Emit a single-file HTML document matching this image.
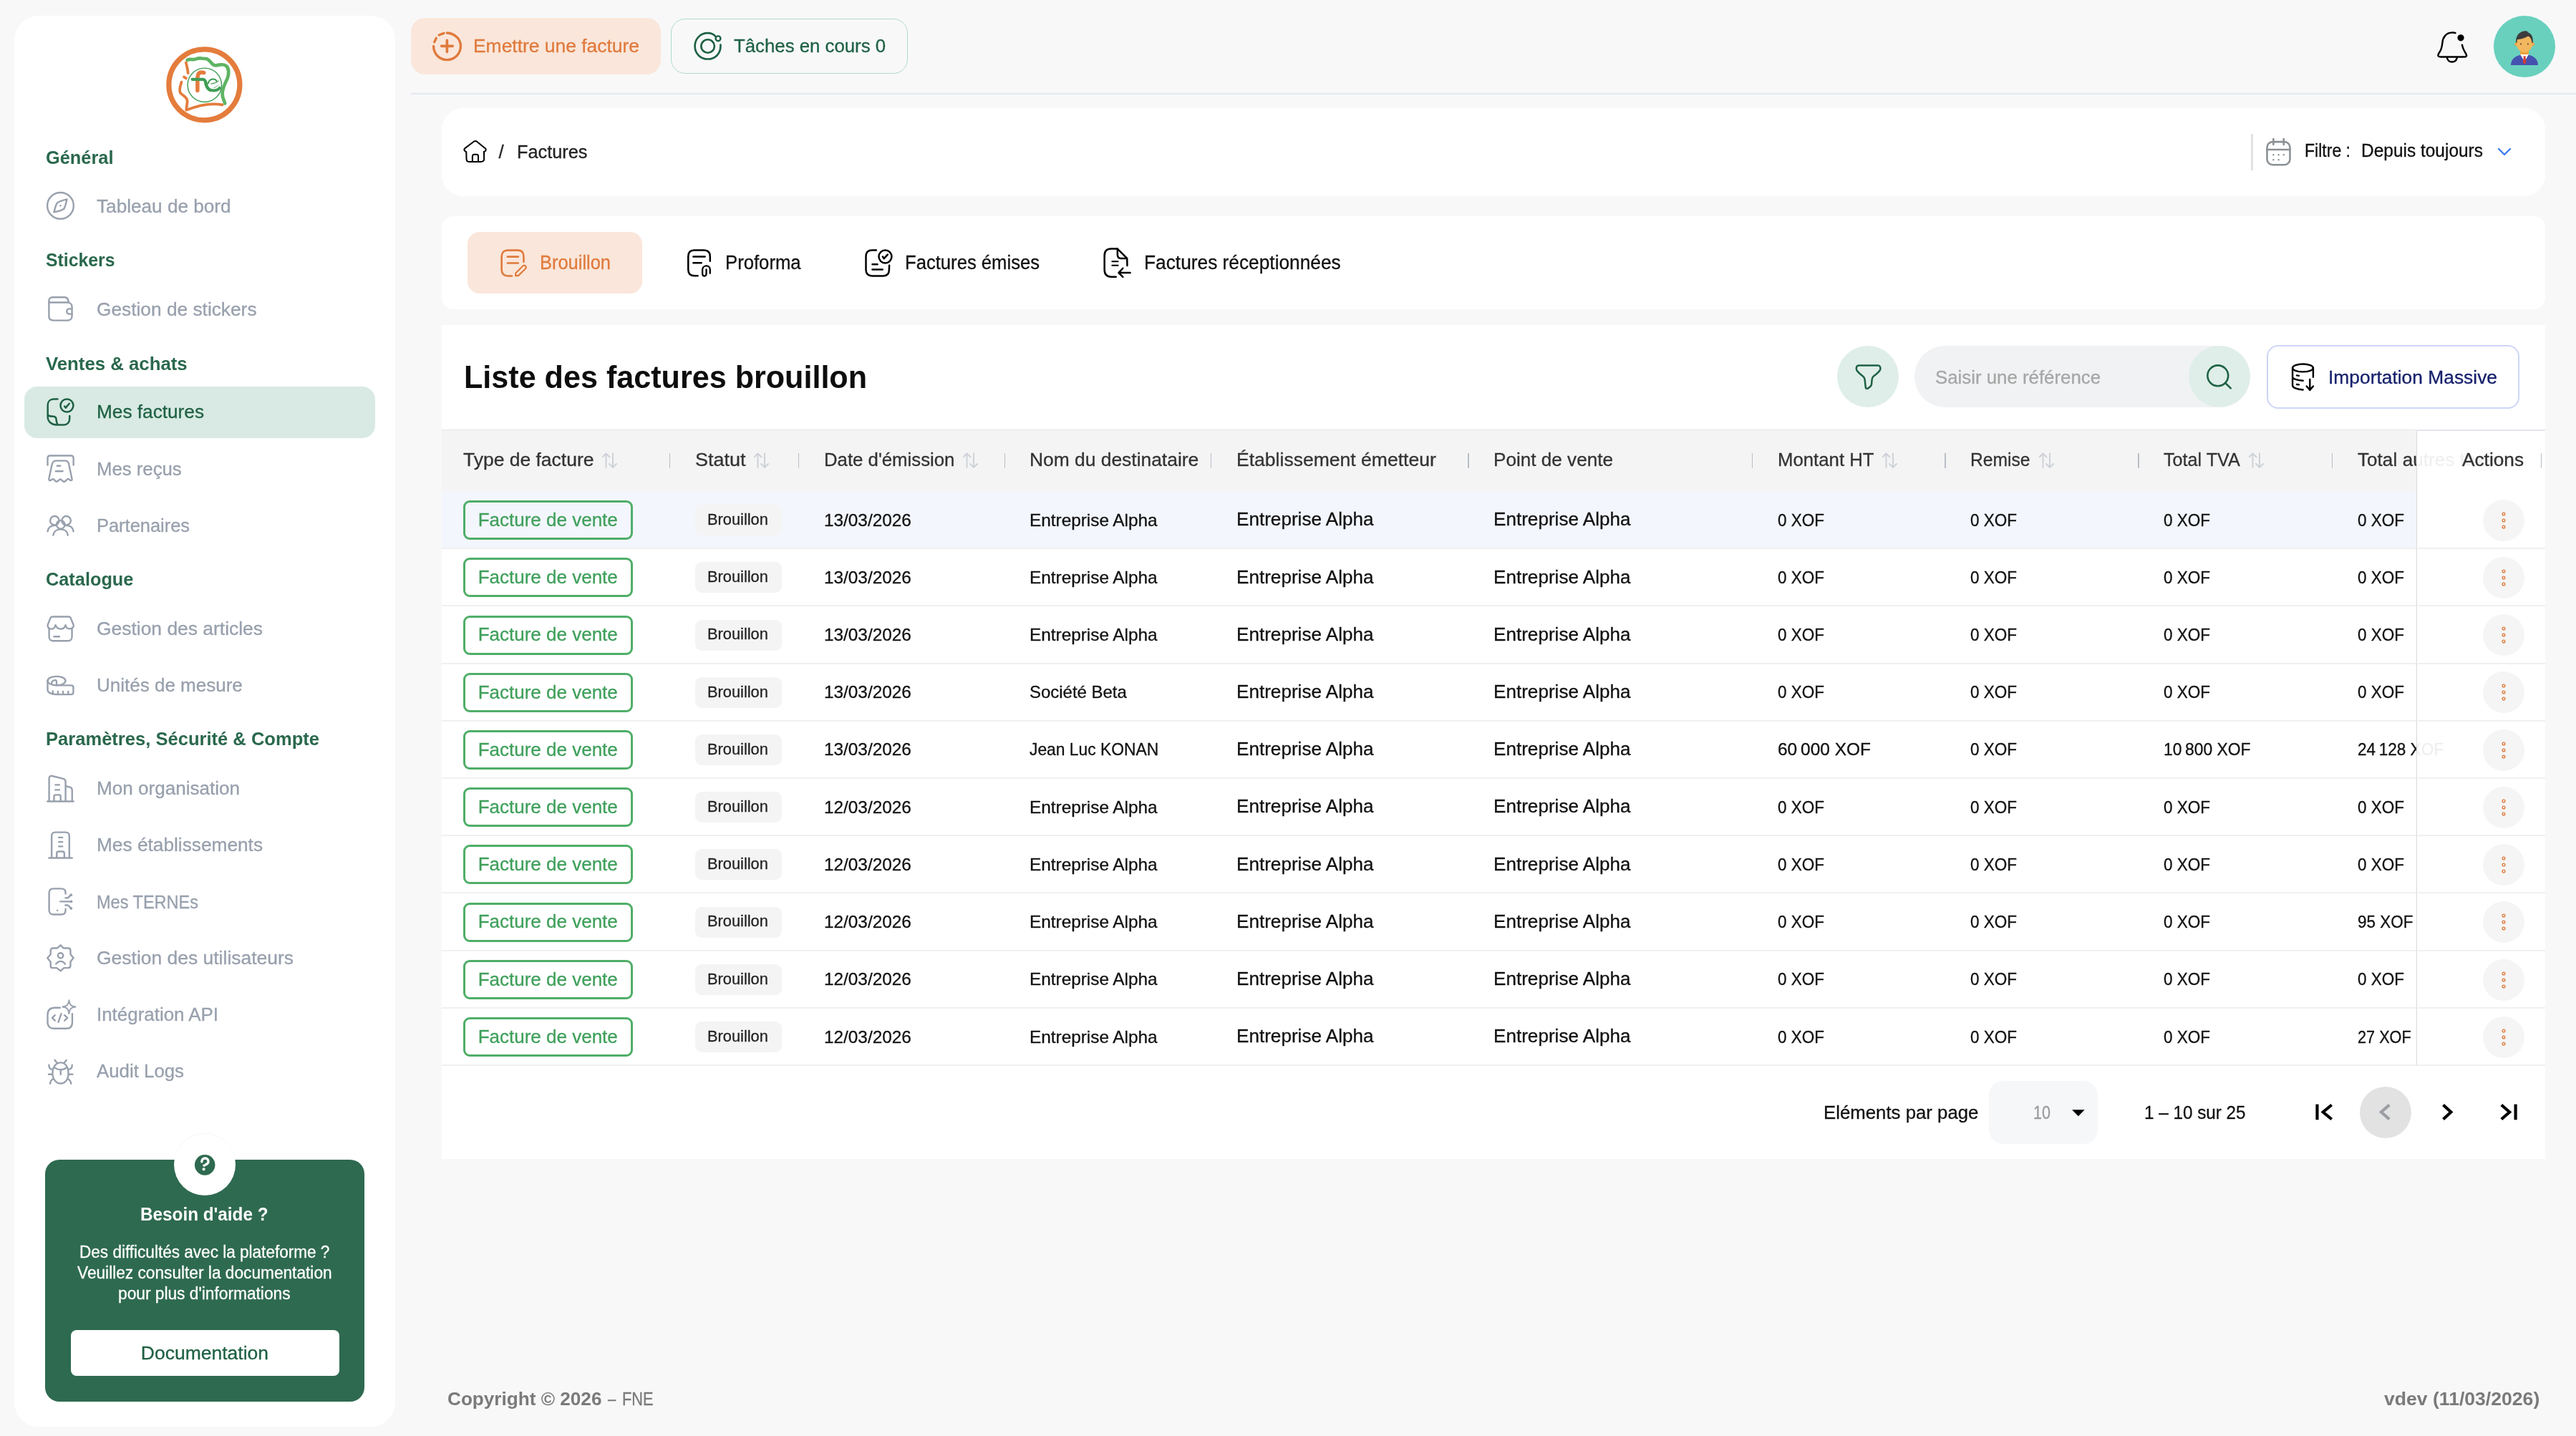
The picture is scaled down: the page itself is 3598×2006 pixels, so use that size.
<!DOCTYPE html><html><head><meta charset="utf-8"><style>
html,body{margin:0;padding:0;}
body{width:3598px;height:2006px;background:#f8f8f9;position:relative;overflow:hidden;font-family:"Liberation Sans",sans-serif;}
.t{position:absolute;white-space:nowrap;-webkit-font-smoothing:antialiased;}
#w{position:absolute;left:0;top:0;width:3598px;height:2006px;will-change:transform;}
.b{position:absolute;box-sizing:border-box;}
</style></head><body><div id="w">
<div class="b" style="left:20.0px;top:22.0px;width:532.0px;height:1971.0px;background:#fff;border-radius:34px;"></div>
<svg class="b" style="left:220px;top:55px;" width="130" height="130" viewBox="0 0 1436 1436" fill="none" stroke-linecap="round" stroke-linejoin="round">
<circle cx="722" cy="700" r="547" stroke="#e47c3c" stroke-width="80"/>
<circle cx="727" cy="705" r="262" stroke="#3f9e55" stroke-width="16"/>
<path d="M460,320 C520,290 560,330 600,300 C650,280 700,300 760,300 C820,320 830,390 880,400 C950,410 990,360 1060,410 C1110,450 1100,540 1080,600 C1040,680 1000,760 1000,840 C1000,920 1040,960 1040,990" stroke="#5eb462" stroke-width="52"/>
<path d="M440,360 C460,440 470,500 470,520 M410,580 L440,600 M370,660 C350,720 330,780 350,820 C380,870 460,880 460,960 C455,1020 445,1060 445,1090 C600,1030 800,970 1000,1010" stroke="#e47c3c" stroke-width="42"/>
<path d="M617,790 L617,600 C617,540 640,508 680,508 L715,515" stroke="#e47c3c" stroke-width="60"/>
<path d="M536,617 L700,617 C730,617 745,650 752,700 C765,765 805,790 865,790 C910,790 940,775 958,752" stroke="#3f9e55" stroke-width="46"/>
<path d="M738,650 C748,720 770,765 815,785" stroke="#3f9e55" stroke-width="44"/>
<path d="M780,682 C790,640 815,615 855,612 C890,610 905,625 912,645" stroke="#3f9e55" stroke-width="22"/>
<path d="M826,686 C870,680 915,668 940,640" stroke="#3f9e55" stroke-width="12"/>
<path d="M872,745 C895,738 920,725 932,708" stroke="#3f9e55" stroke-width="10"/>
</svg>
<div class="t" style="left:63.5px;top:207.0px;font-size:26.00px;line-height:26.00px;font-weight:700;color:#2a684d;transform:scaleX(0.9760);transform-origin:0 0;">Général</div>
<div class="t" style="left:63.5px;top:350.0px;font-size:26.00px;line-height:26.00px;font-weight:700;color:#2a684d;transform:scaleX(0.9538);transform-origin:0 0;">Stickers</div>
<div class="t" style="left:63.5px;top:495.0px;font-size:26.00px;line-height:26.00px;font-weight:700;color:#2a684d;transform:scaleX(0.9909);transform-origin:0 0;">Ventes &amp; achats</div>
<div class="t" style="left:63.5px;top:796.0px;font-size:26.00px;line-height:26.00px;font-weight:700;color:#2a684d;transform:scaleX(0.9740);transform-origin:0 0;">Catalogue</div>
<div class="t" style="left:63.5px;top:1019.0px;font-size:26.00px;line-height:26.00px;font-weight:700;color:#2a684d;transform:scaleX(0.9828);transform-origin:0 0;">Paramètres, Sécurité &amp; Compte</div>
<svg class="b" style="left:55px;top:260px;" width="60" height="60" viewBox="0 0 1436 1436" fill="none" stroke-linecap="round" stroke-linejoin="round"><circle cx="705" cy="655" r="440" stroke="#98a0ad" stroke-width="57"/><path d="M920,440 C880,620 860,700 820,760 C760,800 650,840 490,870 C530,700 560,600 600,560 C660,500 760,480 920,440 Z" stroke="#98a0ad" stroke-width="57"/><circle cx="705" cy="655" r="30" fill="#98a0ad"/></svg>
<div class="t" style="left:135.0px;top:274.7px;font-size:26.00px;line-height:26.00px;font-weight:400;color:#98a0ad;transform:scaleX(1.0061);transform-origin:0 0;-webkit-text-stroke:0.3px #98a0ad;">Tableau de bord</div>
<svg class="b" style="left:55px;top:400px;" width="60" height="60" viewBox="0 0 1436 1436" fill="none" stroke-linecap="round" stroke-linejoin="round"><path d="M320,540 L320,1000 C320,1090 380,1140 470,1140 L940,1140 C1030,1140 1090,1080 1090,1000 L1090,690 C1090,600 1030,540 940,540 Z" stroke="#98a0ad" stroke-width="57"/><path d="M320,540 L320,480 C320,410 370,365 440,365 L840,365 C920,365 970,430 975,540" stroke="#98a0ad" stroke-width="57"/><path d="M1090,750 L1000,750 C950,750 915,790 915,838 C915,885 950,925 1000,925 L1090,925" stroke="#98a0ad" stroke-width="57"/></svg>
<div class="t" style="left:135.0px;top:419.0px;font-size:26.00px;line-height:26.00px;font-weight:400;color:#98a0ad;transform:scaleX(1.0110);transform-origin:0 0;-webkit-text-stroke:0.3px #98a0ad;">Gestion de stickers</div>
<svg class="b" style="left:55px;top:625px;" width="60" height="60" viewBox="0 0 1436 1436" fill="none" stroke-linecap="round" stroke-linejoin="round"><path d="M275,590 L275,360 C275,310 310,275 360,275 L1060,275 C1110,275 1140,310 1140,360 L1140,590" stroke="#98a0ad" stroke-width="57"/><path d="M430,540 C450,480 500,445 560,445 L860,445 C920,445 965,480 980,540 L1090,1060 C1100,1110 1040,1120 1010,1080 C980,1050 960,1040 940,1060 L850,1140 C830,1160 810,1150 790,1130 L730,1080 C710,1060 690,1060 670,1080 L610,1130 C590,1150 560,1150 540,1130 L480,1070 C460,1050 440,1050 420,1070 L380,1100 C340,1120 300,1080 320,1040 Z" stroke="#98a0ad" stroke-width="57"/><path d="M595,615 L700,615 M545,795 L780,795" stroke="#98a0ad" stroke-width="57"/></svg>
<div class="t" style="left:135.0px;top:641.5px;font-size:26.00px;line-height:26.00px;font-weight:400;color:#98a0ad;transform:scaleX(0.9899);transform-origin:0 0;-webkit-text-stroke:0.3px #98a0ad;">Mes reçus</div>
<svg class="b" style="left:55px;top:703px;" width="60" height="60" viewBox="0 0 1436 1436" fill="none" stroke-linecap="round" stroke-linejoin="round"><circle cx="510" cy="580" r="150" stroke="#98a0ad" stroke-width="57"/><circle cx="900" cy="580" r="150" stroke="#98a0ad" stroke-width="57"/><circle cx="712" cy="715" r="140" stroke="#98a0ad" stroke-width="57"/><path d="M275,940 C290,820 380,740 560,740 M1140,940 C1125,820 1040,740 860,740 M465,1070 C480,950 570,870 712,870 C855,870 940,950 950,1070" stroke="#98a0ad" stroke-width="57"/></svg>
<div class="t" style="left:135.0px;top:721.0px;font-size:26.00px;line-height:26.00px;font-weight:400;color:#98a0ad;transform:scaleX(0.9778);transform-origin:0 0;-webkit-text-stroke:0.3px #98a0ad;">Partenaires</div>
<svg class="b" style="left:55px;top:846px;" width="60" height="60" viewBox="0 0 1436 1436" fill="none" stroke-linecap="round" stroke-linejoin="round"><path d="M360,440 C360,400 400,370 440,370 L980,370 C1020,370 1055,400 1055,440 L1140,640 C1160,700 1110,770 1020,775 C950,780 890,740 875,650 C850,740 790,780 720,780 C640,780 570,740 540,650 C520,740 470,780 400,780 C310,780 260,710 280,640 Z" stroke="#98a0ad" stroke-width="57"/><path d="M325,760 L325,1040 C325,1120 380,1180 460,1180 L960,1180 C1040,1180 1090,1120 1090,1040 L1090,760 M490,1035 L670,1035" stroke="#98a0ad" stroke-width="57"/></svg>
<div class="t" style="left:135.0px;top:865.0px;font-size:26.00px;line-height:26.00px;font-weight:400;color:#98a0ad;transform:scaleX(1.0162);transform-origin:0 0;-webkit-text-stroke:0.3px #98a0ad;">Gestion des articles</div>
<svg class="b" style="left:55px;top:925px;" width="60" height="60" viewBox="0 0 1436 1436" fill="none" stroke-linecap="round" stroke-linejoin="round"><ellipse cx="575" cy="625" rx="300" ry="150" stroke="#98a0ad" stroke-width="57"/><path d="M275,625 L275,930 C275,1010 380,1075 560,1080 L1060,1080 C1110,1080 1135,1050 1135,1010 L1135,840 C1135,800 1110,775 1060,775 L560,775 M410,700 C410,640 470,600 540,600 C570,600 575,640 575,680 L575,770 M450,970 L450,1060 M620,980 L620,1060 M790,980 L790,1060 M965,980 L965,1060" stroke="#98a0ad" stroke-width="57"/></svg>
<div class="t" style="left:135.0px;top:944.0px;font-size:26.00px;line-height:26.00px;font-weight:400;color:#98a0ad;-webkit-text-stroke:0.3px #98a0ad;">Unités de mesure</div>
<svg class="b" style="left:55px;top:1070px;" width="60" height="60" viewBox="0 0 1436 1436" fill="none" stroke-linecap="round" stroke-linejoin="round"><path d="M270,1185 L1140,1185 M325,1180 L325,420 C325,350 370,320 430,335 L800,430 C850,445 875,480 875,530 L875,1180 M875,670 L1020,710 C1070,725 1095,760 1095,810 L1095,1180 M535,630 L670,630 M535,800 L670,800 M490,1180 L490,1010 C490,970 520,965 550,965 L660,965 C690,965 710,985 710,1015 L710,1180" stroke="#98a0ad" stroke-width="57"/></svg>
<div class="t" style="left:135.0px;top:1088.0px;font-size:26.00px;line-height:26.00px;font-weight:400;color:#98a0ad;transform:scaleX(1.0028);transform-origin:0 0;-webkit-text-stroke:0.3px #98a0ad;">Mon organisation</div>
<svg class="b" style="left:55px;top:1149px;" width="60" height="60" viewBox="0 0 1436 1436" fill="none" stroke-linecap="round" stroke-linejoin="round"><path d="M320,1185 L1095,1185 M410,1180 L410,440 C410,370 460,325 530,325 L880,325 C950,325 1000,370 1000,440 L1000,1180 M650,500 L770,500 M650,650 L770,650 M650,800 L770,800 M580,1180 L580,1030 C580,990 610,970 650,970 L770,970 C810,970 835,1000 835,1040 L835,1180" stroke="#98a0ad" stroke-width="57"/></svg>
<div class="t" style="left:135.0px;top:1167.0px;font-size:26.00px;line-height:26.00px;font-weight:400;color:#98a0ad;transform:scaleX(1.0098);transform-origin:0 0;-webkit-text-stroke:0.3px #98a0ad;">Mes établissements</div>
<svg class="b" style="left:55px;top:1228px;" width="60" height="60" viewBox="0 0 1436 1436" fill="none" stroke-linecap="round" stroke-linejoin="round"><path d="M875,490 L875,450 C875,370 820,320 730,320 L470,320 C380,320 325,375 325,470 L325,1040 C325,1130 390,1185 470,1185 L730,1185 C820,1185 875,1130 875,1040 L875,1000 M700,750 L1060,750 M870,630 L920,630 C980,630 1010,590 1030,545 M870,875 L930,875 C980,875 1010,920 1040,970 M600,1050 L605,1050" stroke="#98a0ad" stroke-width="57"/><circle cx="1060" cy="530" r="45" fill="#98a0ad"/><circle cx="1065" cy="750" r="45" fill="#98a0ad"/><circle cx="1060" cy="980" r="45" fill="#98a0ad"/></svg>
<div class="t" style="left:135.0px;top:1246.5px;font-size:26.00px;line-height:26.00px;font-weight:400;color:#98a0ad;transform:scaleX(0.9045);transform-origin:0 0;-webkit-text-stroke:0.3px #98a0ad;">Mes TERNEs</div>
<svg class="b" style="left:55px;top:1307px;" width="60" height="60" viewBox="0 0 1436 1436" fill="none" stroke-linecap="round" stroke-linejoin="round"><path d="M710,320 L810,420 L960,420 C1010,420 1040,455 1040,500 L1040,620 L1140,750 L1040,870 L1040,1000 C1040,1050 1010,1080 960,1080 L820,1080 L710,1180 L580,1080 L430,1080 C380,1080 375,1050 375,1000 L375,880 L270,750 L375,630 L375,500 C375,455 410,420 450,420 L590,420 Z" stroke="#98a0ad" stroke-width="57"/><circle cx="708" cy="668" r="88" stroke="#98a0ad" stroke-width="57"/><path d="M555,945 C610,880 660,860 712,860 C770,860 820,890 860,950" stroke="#98a0ad" stroke-width="57"/></svg>
<div class="t" style="left:135.0px;top:1325.0px;font-size:26.00px;line-height:26.00px;font-weight:400;color:#98a0ad;transform:scaleX(1.0177);transform-origin:0 0;-webkit-text-stroke:0.3px #98a0ad;">Gestion des utilisateurs</div>
<svg class="b" style="left:55px;top:1386px;" width="60" height="60" viewBox="0 0 1436 1436" fill="none" stroke-linecap="round" stroke-linejoin="round"><path d="M690,520 L520,520 C370,520 275,600 275,760 L275,1010 C275,1140 360,1215 500,1215 L900,1215 C1030,1215 1100,1140 1100,1010 L1100,725 M520,770 L430,860 L520,950 M840,770 L940,860 L840,950 M730,720 L635,1000" stroke="#98a0ad" stroke-width="57"/><path d="M990,270 C1010,420 1050,470 1210,490 C1050,510 1010,560 990,720 C970,560 930,510 770,490 C930,470 970,420 990,270 Z" stroke="#98a0ad" stroke-width="45"/></svg>
<div class="t" style="left:135.0px;top:1404.0px;font-size:26.00px;line-height:26.00px;font-weight:400;color:#98a0ad;transform:scaleX(0.9968);transform-origin:0 0;-webkit-text-stroke:0.3px #98a0ad;">Intégration API</div>
<svg class="b" style="left:55px;top:1465px;" width="60" height="60" viewBox="0 0 1436 1436" fill="none" stroke-linecap="round" stroke-linejoin="round"><path d="M712,465 C560,465 440,600 440,820 C440,1030 570,1160 712,1160 C860,1160 970,1030 970,820 C970,600 860,465 712,465 Z M490,610 C560,680 640,700 712,700 C790,700 860,680 920,620 M712,700 L712,860 M515,380 L590,470 M905,385 L830,470 M320,545 C320,640 360,690 440,690 M1095,545 C1095,640 1050,690 975,690 M310,855 L440,855 M975,855 L1110,855 M360,1170 C370,1080 400,1030 465,1015 M1060,1170 C1045,1080 1010,1030 945,1015" stroke="#98a0ad" stroke-width="57"/></svg>
<div class="t" style="left:135.0px;top:1483.0px;font-size:26.00px;line-height:26.00px;font-weight:400;color:#98a0ad;transform:scaleX(0.9930);transform-origin:0 0;-webkit-text-stroke:0.3px #98a0ad;">Audit Logs</div>
<div class="b" style="left:34.0px;top:540.0px;width:490.0px;height:72.0px;background:#d8eae3;border-radius:18px;"></div>
<svg class="b" style="left:55px;top:545px;" width="60" height="60" viewBox="0 0 1436 1436" fill="none" stroke-linecap="round" stroke-linejoin="round"><path d="M610,300 L480,300 C360,300 280,380 280,500 L280,900 C280,1060 420,1160 580,1160 L820,1160 C940,1160 1010,1070 1010,960 L1010,860" stroke="#1f6145" stroke-width="60"/><path d="M285,840 C330,870 400,880 460,880 C530,880 565,920 565,990 C570,1060 580,1100 600,1130" stroke="#1f6145" stroke-width="60"/><circle cx="920" cy="515" r="215" stroke="#1f6145" stroke-width="60"/><path d="M840,540 L880,590 L1000,450" stroke="#1f6145" stroke-width="60"/></svg>
<div class="t" style="left:135.0px;top:562.0px;font-size:26.00px;line-height:26.00px;font-weight:400;color:#1f6145;transform:scaleX(1.0079);transform-origin:0 0;-webkit-text-stroke:0.3px #1f6145;">Mes factures</div>
<div class="b" style="left:63.0px;top:1620.0px;width:445.5px;height:338.0px;background:#2e6a50;border-radius:20px;"></div>
<div class="b" style="left:243px;top:1584px;width:86px;height:86px;border-radius:50%;background:#fff;box-shadow:0 -1px 2px rgba(0,0,0,0.04);"></div>
<svg class="b" style="left:235px;top:1575px;" width="100" height="100" viewBox="0 0 1436 1436" fill="none" stroke-linecap="round" stroke-linejoin="round"><circle cx="735" cy="752" r="205" fill="#2e6a50"/><path d="M672,688 C672,642 702,618 738,618 C780,618 805,648 805,685 C805,722 770,736 748,748 C728,760 716,765 716,762" stroke="#fff" stroke-width="48"/><circle cx="712" cy="838" r="29" fill="#fff"/></svg>
<div class="t" style="left:196.4px;top:1683.0px;font-size:26.00px;line-height:26.00px;font-weight:700;color:#fff;transform:scaleX(0.9341);transform-origin:0 0;">Besoin d'aide ?</div>
<div class="t" style="left:111.0px;top:1737.5px;font-size:23.00px;line-height:23.00px;font-weight:400;color:#fff;transform:scaleX(0.9808);transform-origin:0 0;-webkit-text-stroke:0.3px #fff;">Des difficultés avec la plateforme ?</div>
<div class="t" style="left:107.9px;top:1766.5px;font-size:23.00px;line-height:23.00px;font-weight:400;color:#fff;transform:scaleX(0.9863);transform-origin:0 0;-webkit-text-stroke:0.3px #fff;">Veuillez consulter la documentation</div>
<div class="t" style="left:165.4px;top:1795.5px;font-size:23.00px;line-height:23.00px;font-weight:400;color:#fff;transform:scaleX(0.9879);transform-origin:0 0;-webkit-text-stroke:0.3px #fff;">pour plus d'informations</div>
<div class="b" style="left:99.0px;top:1858.0px;width:374.5px;height:64.0px;background:#fff;border-radius:8px;"></div>
<div class="t" style="left:196.8px;top:1876.6px;font-size:26.50px;line-height:26.50px;font-weight:400;color:#1f6145;-webkit-text-stroke:0.3px #1f6145;">Documentation</div>
<div class="b" style="left:574.0px;top:25.0px;width:349.0px;height:78.5px;background:#fae6da;border-radius:20px;"></div>
<svg class="b" style="left:500px;top:0px;" width="200" height="200" viewBox="0 0 1436 1436" fill="none" stroke-linecap="round" stroke-linejoin="round"><path d="M893,330 C980,335 1030,400 1030,462 C1030,540 970,600 893,600 C815,600 758,540 758,462" stroke="#e07a3c" stroke-width="24"/><path d="M766,422 L785,383 M812,352 L862,333" stroke="#e07a3c" stroke-width="24"/><path d="M893,405 L893,520 M837,462 L950,462" stroke="#e07a3c" stroke-width="26"/></svg>
<div class="t" style="left:661.0px;top:51.2px;font-size:26.50px;line-height:26.50px;font-weight:400;color:#e07a3c;transform:scaleX(0.9969);transform-origin:0 0;-webkit-text-stroke:0.3px #e07a3c;">Emettre une facture</div>
<div class="b" style="left:937.0px;top:25.5px;width:330.5px;height:77.5px;border:1.5px solid #afdaca;border-radius:20px;"></div>
<svg class="b" style="left:955px;top:35px;" width="70" height="70" viewBox="0 0 1436 1436" fill="none" stroke-linecap="round" stroke-linejoin="round"><path d="M910,325 C850,260 780,230 690,230 C470,230 320,400 320,605 C320,820 480,975 690,975 C900,975 1055,820 1055,605 C1055,590 1055,575 1055,565" stroke="#1f6145" stroke-width="55"/><circle cx="690" cy="605" r="190" stroke="#1f6145" stroke-width="55"/><circle cx="985" cy="385" r="70" stroke="#1f6145" stroke-width="50"/></svg>
<div class="t" style="left:1025.0px;top:51.2px;font-size:26.50px;line-height:26.50px;font-weight:400;color:#1f6145;transform:scaleX(0.9725);transform-origin:0 0;-webkit-text-stroke:0.3px #1f6145;">Tâches en cours 0</div>
<div class="b" style="left:574.0px;top:129.5px;width:3024.0px;height:2.0px;background:#e3e8ef;"></div>
<svg class="b" style="left:3390px;top:30px;" width="70" height="70" viewBox="0 0 1436 1436" fill="none" stroke-linecap="round" stroke-linejoin="round"><path d="M810,330 C770,310 730,320 700,320 C560,320 450,450 440,600 C430,700 420,780 370,860 C330,920 300,960 320,990 C340,1010 360,1015 400,1015 L1070,1015 C1110,1015 1150,990 1120,940 C1080,870 1020,780 1005,670" stroke="#000" stroke-width="50"/><path d="M570,1030 C580,1110 640,1160 712,1160 C785,1160 845,1110 860,1030" stroke="#000" stroke-width="50"/><circle cx="965" cy="468" r="95" fill="#000"/></svg>
<svg class="b" style="left:3480px;top:20px" width="92" height="92" viewBox="0 0 1436 1436">
<circle cx="718" cy="703" r="672" fill="#69d0be"/>
<rect x="625" y="780" width="185" height="120" fill="#f2a33a"/>
<path d="M420,1110 C425,960 540,885 720,870 C900,885 1012,960 1015,1110 Z" fill="#4652b0"/>
<path d="M625,875 L810,875 L720,1030 Z" fill="#fff"/>
<path d="M690,912 L750,912 L740,945 L760,1050 L720,1090 L682,1050 L700,945 Z" fill="#d43b34"/>
<circle cx="540" cy="650" r="38" fill="#f2a33a"/><circle cx="898" cy="650" r="38" fill="#f2a33a"/>
<ellipse cx="718" cy="630" rx="180" ry="195" fill="#f2b75e"/>
<path d="M535,625 C515,470 610,365 745,362 C790,362 785,385 795,395 C885,430 915,520 900,625 L880,625 C875,540 840,500 800,478 C710,530 630,545 560,550 L552,625 Z" fill="#3d3d3d"/>
<circle cx="640" cy="648" r="16" fill="#5b3a1e"/><circle cx="795" cy="648" r="16" fill="#5b3a1e"/>
</svg>
<div class="b" style="left:617.0px;top:151.0px;width:2938.0px;height:123.0px;background:#fff;border-radius:30px;"></div>
<svg class="b" style="left:635px;top:180px;" width="90" height="60" viewBox="0 0 2154 1436" fill="none" stroke-linecap="round" stroke-linejoin="round"><path d="M330,720 C310,690 320,670 345,650 L650,420 C690,395 720,400 750,430 L1030,660 C1060,690 1050,740 1000,760 L980,760 L985,1000 C990,1060 950,1100 880,1100 L480,1100 C420,1100 395,1050 395,1000 L390,770 L370,760 C350,755 340,740 330,720 Z M595,1095 L595,920 C595,870 625,855 660,855 L740,855 C775,855 790,885 790,920 L790,1095" stroke="#000" stroke-width="48"/></svg>
<div class="t" style="left:696.6px;top:198.5px;font-size:26.00px;line-height:26.00px;font-weight:400;color:#222;-webkit-text-stroke:0.3px #222;">/</div>
<div class="t" style="left:721.5px;top:198.5px;font-size:26.00px;line-height:26.00px;font-weight:400;color:#222;transform:scaleX(0.9739);transform-origin:0 0;-webkit-text-stroke:0.3px #222;">Factures</div>
<div class="b" style="left:3144.0px;top:187.0px;width:2.7px;height:51.0px;background:#e2e2e2;"></div>
<svg class="b" style="left:3140px;top:170px;" width="100" height="80" viewBox="0 0 1795 1436" fill="none" stroke-linecap="round" stroke-linejoin="round"><rect x="475" y="505" width="575" height="575" rx="140" stroke="#8b9094" stroke-width="46"/><path d="M475,700 L1050,700 M635,432 L635,575 M893,432 L893,575" stroke="#8b9094" stroke-width="46"/><circle cx="635" cy="828" r="21" fill="#8b9094"/><circle cx="765" cy="828" r="21" fill="#8b9094"/><circle cx="893" cy="828" r="21" fill="#8b9094"/><circle cx="635" cy="955" r="21" fill="#8b9094"/><circle cx="765" cy="955" r="21" fill="#8b9094"/></svg>
<div class="t" style="left:3219.0px;top:198.2px;font-size:25.00px;line-height:25.00px;font-weight:400;color:#111;transform:scaleX(0.9216);transform-origin:0 0;-webkit-text-stroke:0.3px #111;">Filtre :</div>
<div class="t" style="left:3298.0px;top:198.2px;font-size:25.00px;line-height:25.00px;font-weight:400;color:#111;transform:scaleX(0.9787);transform-origin:0 0;-webkit-text-stroke:0.3px #111;">Depuis toujours</div>
<svg class="b" style="left:3486px;top:203px" width="24" height="18" viewBox="0 0 24 18" fill="none"><path d="M4,5 L12,13 L20,5" stroke="#3b7cf0" stroke-width="2.4" stroke-linecap="round" stroke-linejoin="round"/></svg>
<div class="b" style="left:617.0px;top:302.0px;width:2938.0px;height:129.5px;background:#fff;border-radius:16px;"></div>
<div class="b" style="left:653.0px;top:324.3px;width:244.0px;height:85.5px;background:#fae6da;border-radius:17px;"></div>
<svg class="b" style="left:690px;top:340px;" width="60" height="60" viewBox="0 0 1436 1436" fill="none" stroke-linecap="round" stroke-linejoin="round"><path d="M995,620 L990,420 C985,300 920,230 800,230 L460,230 C330,230 255,310 255,440 L255,870 C255,1010 330,1090 470,1090 L600,1090" stroke="#e07a3c" stroke-width="62"/><path d="M450,445 L810,445 M450,660 L810,660" stroke="#e07a3c" stroke-width="62"/><path d="M720,1080 L720,1000 L960,760 C990,730 1030,730 1055,760 C1080,790 1075,825 1050,850 L810,1080 Z" stroke="#e07a3c" stroke-width="50"/></svg>
<div class="t" style="left:754.0px;top:354.4px;font-size:27.00px;line-height:27.00px;font-weight:400;color:#e07a3c;transform:scaleX(0.9424);transform-origin:0 0;-webkit-text-stroke:0.3px #e07a3c;">Brouillon</div>
<svg class="b" style="left:950px;top:340px;" width="60" height="60" viewBox="0 0 1436 1436" fill="none" stroke-linecap="round" stroke-linejoin="round"><path d="M1000,590 L1000,440 C1000,300 920,230 800,230 L470,230 C340,230 270,310 270,440 L270,880 C270,1020 350,1085 480,1085 L590,1085" stroke="#000" stroke-width="60"/><path d="M440,440 L830,440 M440,655 L710,655" stroke="#000" stroke-width="60"/><path d="M1000,1000 L1000,880 C1000,800 950,750 880,750 C810,750 745,800 745,880 L745,1010 C745,1060 775,1090 815,1090 C855,1090 875,1050 875,1000 L875,870" stroke="#000" stroke-width="55"/></svg>
<div class="t" style="left:1013.0px;top:354.4px;font-size:27.00px;line-height:27.00px;font-weight:400;color:#111;transform:scaleX(0.9511);transform-origin:0 0;-webkit-text-stroke:0.3px #111;">Proforma</div>
<svg class="b" style="left:1198px;top:338px;" width="60" height="60" viewBox="0 0 1436 1436" fill="none" stroke-linecap="round" stroke-linejoin="round"><path d="M620,275 L480,275 C350,275 275,350 275,480 L275,930 C275,1070 350,1135 480,1135 L860,1135 C990,1135 1050,1060 1050,930 L1055,785" stroke="#000" stroke-width="60"/><circle cx="920" cy="490" r="215" stroke="#000" stroke-width="60"/><path d="M835,490 L880,555 L1000,420 M490,750 L660,750 M490,920 L830,920" stroke="#000" stroke-width="60"/></svg>
<div class="t" style="left:1264.0px;top:354.4px;font-size:27.00px;line-height:27.00px;font-weight:400;color:#111;transform:scaleX(0.9493);transform-origin:0 0;-webkit-text-stroke:0.3px #111;">Factures émises</div>
<svg class="b" style="left:1532px;top:338px;" width="60" height="60" viewBox="0 0 1436 1436" fill="none" stroke-linecap="round" stroke-linejoin="round"><path d="M640,1165 L480,1165 C330,1165 255,1080 255,930 L255,460 C255,310 330,230 480,230 L690,230 L1010,545 L1015,790" stroke="#000" stroke-width="60"/><path d="M690,230 L690,420 C690,500 730,550 810,550 L1000,550" stroke="#000" stroke-width="60"/><path d="M510,655 L710,655 M510,785 L710,785" stroke="#000" stroke-width="48"/><path d="M1115,1030 L730,1030 M870,880 L730,1030 L870,1170" stroke="#000" stroke-width="60"/></svg>
<div class="t" style="left:1598.0px;top:354.4px;font-size:27.00px;line-height:27.00px;font-weight:400;color:#111;transform:scaleX(0.9737);transform-origin:0 0;-webkit-text-stroke:0.3px #111;">Factures réceptionnées</div>
<div class="b" style="left:617.0px;top:454.0px;width:2938.0px;height:1164.6px;background:#fff;"></div>
<div class="t" style="left:648.0px;top:503.9px;font-size:45.00px;line-height:45.00px;font-weight:700;color:#0d0d0d;transform:scaleX(0.9582);transform-origin:0 0;">Liste des factures brouillon</div>
<div class="b" style="left:2566.0px;top:483.0px;width:86.0px;height:86.0px;background:#dfeee8;border-radius:50%;"></div>
<svg class="b" style="left:2580px;top:496px;" width="60" height="60" viewBox="0 0 1436 1436" fill="none" stroke-linecap="round" stroke-linejoin="round"><path d="M390,345 L1030,345 C1100,345 1130,420 1100,500 C1060,570 950,660 870,720 C835,750 830,790 825,860 L815,980 C810,1040 780,1060 700,1110 C650,1140 620,1120 615,1060 L590,820 C580,760 570,740 530,710 C450,650 360,570 320,510 C290,440 310,345 390,345 Z" stroke="#1f6145" stroke-width="60"/></svg>
<div class="b" style="left:2674.0px;top:483.0px;width:469.0px;height:86.0px;background:#f1f2f4;border-radius:43px;"></div>
<div class="t" style="left:2703.0px;top:514.1px;font-size:26.50px;line-height:26.50px;font-weight:400;color:#a6a6a6;transform:scaleX(0.9741);transform-origin:0 0;-webkit-text-stroke:0.3px #a6a6a6;">Saisir une référence</div>
<div class="b" style="left:3057.0px;top:483.0px;width:86.0px;height:86.0px;background:#dfeee8;border-radius:50%;"></div>
<svg class="b" style="left:3070px;top:496px;" width="60" height="60" viewBox="0 0 1436 1436" fill="none" stroke-linecap="round" stroke-linejoin="round"><circle cx="665" cy="690" r="345" stroke="#1f6145" stroke-width="62"/><path d="M920,940 L1095,1110" stroke="#1f6145" stroke-width="62"/></svg>
<div class="b" style="left:3165.5px;top:482.0px;width:353.5px;height:88.5px;border:2px solid #cdd6f6;border-radius:16px;background:#fff;"></div>
<svg class="b" style="left:3186px;top:496px;" width="60" height="60" viewBox="0 0 1436 1436" fill="none" stroke-linecap="round" stroke-linejoin="round"><ellipse cx="730" cy="430" rx="345" ry="130" stroke="#000" stroke-width="58"/><path d="M385,430 L385,1020 C385,1090 530,1150 735,1160 M385,730 C385,790 530,850 735,855 M1075,430 L1075,735 M965,810 L965,1170 M855,1040 L965,1170 L1075,1040 M525,680 L600,690 M525,980 L600,990" stroke="#000" stroke-width="58"/></svg>
<div class="t" style="left:3252.0px;top:514.1px;font-size:26.50px;line-height:26.50px;font-weight:400;color:#16206b;transform:scaleX(0.9954);transform-origin:0 0;-webkit-text-stroke:0.3px #16206b;">Importation Massive</div>
<div class="b" style="left:617.0px;top:600.0px;width:2938.0px;height:86.0px;background:#f4f4f4;border-top:1.5px solid #e3e6ea;"></div>
<div class="t" style="left:646.6px;top:629.0px;font-size:26.00px;line-height:26.00px;font-weight:400;color:#333;transform:scaleX(1.0178);transform-origin:0 0;-webkit-text-stroke:0.3px #333;">Type de facture</div>
<svg class="b" style="left:841.0px;top:630px" width="24" height="26" viewBox="0 0 24 26" fill="none" stroke="#ced2d8" stroke-width="2" stroke-linecap="round" stroke-linejoin="round"><path d="M5.5,3.5 L5.5,23 M0.5,8.5 L5.5,3.5 L10.5,8.5 M15,3.5 L15,23 M10,18 L15,23 L20,18"/></svg>
<div class="t" style="left:970.5px;top:629.0px;font-size:26.00px;line-height:26.00px;font-weight:400;color:#333;transform:scaleX(1.0378);transform-origin:0 0;-webkit-text-stroke:0.3px #333;">Statut</div>
<svg class="b" style="left:1053.0px;top:630px" width="24" height="26" viewBox="0 0 24 26" fill="none" stroke="#ced2d8" stroke-width="2" stroke-linecap="round" stroke-linejoin="round"><path d="M5.5,3.5 L5.5,23 M0.5,8.5 L5.5,3.5 L10.5,8.5 M15,3.5 L15,23 M10,18 L15,23 L20,18"/></svg>
<div class="t" style="left:1150.6px;top:629.0px;font-size:26.00px;line-height:26.00px;font-weight:400;color:#333;transform:scaleX(0.9905);transform-origin:0 0;-webkit-text-stroke:0.3px #333;">Date d'émission</div>
<svg class="b" style="left:1345.0px;top:630px" width="24" height="26" viewBox="0 0 24 26" fill="none" stroke="#ced2d8" stroke-width="2" stroke-linecap="round" stroke-linejoin="round"><path d="M5.5,3.5 L5.5,23 M0.5,8.5 L5.5,3.5 L10.5,8.5 M15,3.5 L15,23 M10,18 L15,23 L20,18"/></svg>
<div class="t" style="left:1438.4px;top:629.0px;font-size:26.00px;line-height:26.00px;font-weight:400;color:#333;transform:scaleX(1.0152);transform-origin:0 0;-webkit-text-stroke:0.3px #333;">Nom du destinataire</div>
<div class="t" style="left:1726.7px;top:629.0px;font-size:26.00px;line-height:26.00px;font-weight:400;color:#333;transform:scaleX(1.0208);transform-origin:0 0;-webkit-text-stroke:0.3px #333;">Établissement émetteur</div>
<div class="t" style="left:2086.0px;top:629.0px;font-size:26.00px;line-height:26.00px;font-weight:400;color:#333;transform:scaleX(1.0047);transform-origin:0 0;-webkit-text-stroke:0.3px #333;">Point de vente</div>
<div class="t" style="left:2482.5px;top:629.0px;font-size:26.00px;line-height:26.00px;font-weight:400;color:#333;transform:scaleX(0.9903);transform-origin:0 0;-webkit-text-stroke:0.3px #333;">Montant HT</div>
<svg class="b" style="left:2629.0px;top:630px" width="24" height="26" viewBox="0 0 24 26" fill="none" stroke="#ced2d8" stroke-width="2" stroke-linecap="round" stroke-linejoin="round"><path d="M5.5,3.5 L5.5,23 M0.5,8.5 L5.5,3.5 L10.5,8.5 M15,3.5 L15,23 M10,18 L15,23 L20,18"/></svg>
<div class="t" style="left:2752.0px;top:629.0px;font-size:26.00px;line-height:26.00px;font-weight:400;color:#333;transform:scaleX(0.9475);transform-origin:0 0;-webkit-text-stroke:0.3px #333;">Remise</div>
<svg class="b" style="left:2847.5px;top:630px" width="24" height="26" viewBox="0 0 24 26" fill="none" stroke="#ced2d8" stroke-width="2" stroke-linecap="round" stroke-linejoin="round"><path d="M5.5,3.5 L5.5,23 M0.5,8.5 L5.5,3.5 L10.5,8.5 M15,3.5 L15,23 M10,18 L15,23 L20,18"/></svg>
<div class="t" style="left:3022.0px;top:629.0px;font-size:26.00px;line-height:26.00px;font-weight:400;color:#333;transform:scaleX(0.9673);transform-origin:0 0;-webkit-text-stroke:0.3px #333;">Total TVA</div>
<svg class="b" style="left:3140.7px;top:630px" width="24" height="26" viewBox="0 0 24 26" fill="none" stroke="#ced2d8" stroke-width="2" stroke-linecap="round" stroke-linejoin="round"><path d="M5.5,3.5 L5.5,23 M0.5,8.5 L5.5,3.5 L10.5,8.5 M15,3.5 L15,23 M10,18 L15,23 L20,18"/></svg>
<div class="t" style="left:3292.9px;top:629.0px;font-size:26.00px;line-height:26.00px;font-weight:400;color:#333;letter-spacing:0.100px;-webkit-text-stroke:0.3px #333;">Total autres taxes</div>
<div class="b" style="left:934.6px;top:633.0px;width:1.6px;height:21.0px;background:#b9bec7;"></div>
<div class="b" style="left:1114.7px;top:633.0px;width:1.6px;height:21.0px;background:#b9bec7;"></div>
<div class="b" style="left:1402.6px;top:633.0px;width:1.6px;height:21.0px;background:#b9bec7;"></div>
<div class="b" style="left:1690.9px;top:633.0px;width:1.6px;height:21.0px;background:#b9bec7;"></div>
<div class="b" style="left:2050.2px;top:633.0px;width:1.6px;height:21.0px;background:#b9bec7;"></div>
<div class="b" style="left:2446.7px;top:633.0px;width:1.6px;height:21.0px;background:#b9bec7;"></div>
<div class="b" style="left:2716.2px;top:633.0px;width:1.6px;height:21.0px;background:#b9bec7;"></div>
<div class="b" style="left:2986.2px;top:633.0px;width:1.6px;height:21.0px;background:#b9bec7;"></div>
<div class="b" style="left:3256.9px;top:633.0px;width:1.6px;height:21.0px;background:#b9bec7;"></div>
<div class="b" style="left:3527.0px;top:633.0px;width:1.6px;height:21.0px;background:#b9bec7;"></div>
<div class="b" style="left:617.0px;top:686.0px;width:2938.0px;height:80.2px;background:#f3f6fd;"></div>
<div class="b" style="left:617.0px;top:765.0px;width:2938.0px;height:1.6px;background:#eff0f2;"></div>
<div class="b" style="left:646.6px;top:699.1px;width:237.9px;height:55.0px;border:3px solid #4fae68;border-radius:9px;"></div>
<div class="t" style="left:667.7px;top:712.9px;font-size:26.00px;line-height:26.00px;font-weight:400;color:#40a05c;-webkit-text-stroke:0.3px #40a05c;">Facture de vente</div>
<div class="b" style="left:970.5px;top:705.1px;width:121.1px;height:43.0px;background:#f4f4f4;border-radius:9px;"></div>
<div class="t" style="left:988.2px;top:714.9px;font-size:22.50px;line-height:22.50px;font-weight:400;color:#222;transform:scaleX(0.9686);transform-origin:0 0;-webkit-text-stroke:0.3px #222;">Brouillon</div>
<div class="t" style="left:1150.6px;top:714.6px;font-size:24.00px;line-height:24.00px;font-weight:400;color:#111;transform:scaleX(1.0141);transform-origin:0 0;-webkit-text-stroke:0.3px #111;">13/03/2026</div>
<div class="t" style="left:1438.4px;top:714.6px;font-size:24.00px;line-height:24.00px;font-weight:400;color:#111;transform:scaleX(1.0142);transform-origin:0 0;-webkit-text-stroke:0.3px #111;">Entreprise Alpha</div>
<div class="t" style="left:1726.7px;top:713.3px;font-size:25.50px;line-height:25.50px;font-weight:400;color:#111;transform:scaleX(1.0235);transform-origin:0 0;-webkit-text-stroke:0.3px #111;">Entreprise Alpha</div>
<div class="t" style="left:2086.0px;top:713.3px;font-size:25.50px;line-height:25.50px;font-weight:400;color:#111;transform:scaleX(1.0235);transform-origin:0 0;-webkit-text-stroke:0.3px #111;">Entreprise Alpha</div>
<div class="t" style="left:2482.5px;top:714.6px;font-size:24.00px;line-height:24.00px;font-weight:400;color:#111;transform:scaleX(0.9387);transform-origin:0 0;-webkit-text-stroke:0.3px #111;">0 XOF</div>
<div class="t" style="left:2752.0px;top:714.6px;font-size:24.00px;line-height:24.00px;font-weight:400;color:#111;transform:scaleX(0.9387);transform-origin:0 0;-webkit-text-stroke:0.3px #111;">0 XOF</div>
<div class="t" style="left:3022.0px;top:714.6px;font-size:24.00px;line-height:24.00px;font-weight:400;color:#111;transform:scaleX(0.9387);transform-origin:0 0;-webkit-text-stroke:0.3px #111;">0 XOF</div>
<div class="t" style="left:3292.9px;top:714.6px;font-size:24.00px;line-height:24.00px;font-weight:400;color:#111;transform:scaleX(0.9387);transform-origin:0 0;-webkit-text-stroke:0.3px #111;">0 XOF</div>
<div class="b" style="left:617.0px;top:845.0px;width:2938.0px;height:1.6px;background:#eff0f2;"></div>
<div class="b" style="left:646.6px;top:779.3px;width:237.9px;height:55.0px;border:3px solid #4fae68;border-radius:9px;"></div>
<div class="t" style="left:667.7px;top:793.1px;font-size:26.00px;line-height:26.00px;font-weight:400;color:#40a05c;-webkit-text-stroke:0.3px #40a05c;">Facture de vente</div>
<div class="b" style="left:970.5px;top:785.3px;width:121.1px;height:43.0px;background:#f4f4f4;border-radius:9px;"></div>
<div class="t" style="left:988.2px;top:795.1px;font-size:22.50px;line-height:22.50px;font-weight:400;color:#222;transform:scaleX(0.9686);transform-origin:0 0;-webkit-text-stroke:0.3px #222;">Brouillon</div>
<div class="t" style="left:1150.6px;top:794.8px;font-size:24.00px;line-height:24.00px;font-weight:400;color:#111;transform:scaleX(1.0141);transform-origin:0 0;-webkit-text-stroke:0.3px #111;">13/03/2026</div>
<div class="t" style="left:1438.4px;top:794.8px;font-size:24.00px;line-height:24.00px;font-weight:400;color:#111;transform:scaleX(1.0142);transform-origin:0 0;-webkit-text-stroke:0.3px #111;">Entreprise Alpha</div>
<div class="t" style="left:1726.7px;top:793.5px;font-size:25.50px;line-height:25.50px;font-weight:400;color:#111;transform:scaleX(1.0235);transform-origin:0 0;-webkit-text-stroke:0.3px #111;">Entreprise Alpha</div>
<div class="t" style="left:2086.0px;top:793.5px;font-size:25.50px;line-height:25.50px;font-weight:400;color:#111;transform:scaleX(1.0235);transform-origin:0 0;-webkit-text-stroke:0.3px #111;">Entreprise Alpha</div>
<div class="t" style="left:2482.5px;top:794.8px;font-size:24.00px;line-height:24.00px;font-weight:400;color:#111;transform:scaleX(0.9387);transform-origin:0 0;-webkit-text-stroke:0.3px #111;">0 XOF</div>
<div class="t" style="left:2752.0px;top:794.8px;font-size:24.00px;line-height:24.00px;font-weight:400;color:#111;transform:scaleX(0.9387);transform-origin:0 0;-webkit-text-stroke:0.3px #111;">0 XOF</div>
<div class="t" style="left:3022.0px;top:794.8px;font-size:24.00px;line-height:24.00px;font-weight:400;color:#111;transform:scaleX(0.9387);transform-origin:0 0;-webkit-text-stroke:0.3px #111;">0 XOF</div>
<div class="t" style="left:3292.9px;top:794.8px;font-size:24.00px;line-height:24.00px;font-weight:400;color:#111;transform:scaleX(0.9387);transform-origin:0 0;-webkit-text-stroke:0.3px #111;">0 XOF</div>
<div class="b" style="left:617.0px;top:926.0px;width:2938.0px;height:1.6px;background:#eff0f2;"></div>
<div class="b" style="left:646.6px;top:859.5px;width:237.9px;height:55.0px;border:3px solid #4fae68;border-radius:9px;"></div>
<div class="t" style="left:667.7px;top:873.3px;font-size:26.00px;line-height:26.00px;font-weight:400;color:#40a05c;-webkit-text-stroke:0.3px #40a05c;">Facture de vente</div>
<div class="b" style="left:970.5px;top:865.5px;width:121.1px;height:43.0px;background:#f4f4f4;border-radius:9px;"></div>
<div class="t" style="left:988.2px;top:875.3px;font-size:22.50px;line-height:22.50px;font-weight:400;color:#222;transform:scaleX(0.9686);transform-origin:0 0;-webkit-text-stroke:0.3px #222;">Brouillon</div>
<div class="t" style="left:1150.6px;top:875.0px;font-size:24.00px;line-height:24.00px;font-weight:400;color:#111;transform:scaleX(1.0141);transform-origin:0 0;-webkit-text-stroke:0.3px #111;">13/03/2026</div>
<div class="t" style="left:1438.4px;top:875.0px;font-size:24.00px;line-height:24.00px;font-weight:400;color:#111;transform:scaleX(1.0142);transform-origin:0 0;-webkit-text-stroke:0.3px #111;">Entreprise Alpha</div>
<div class="t" style="left:1726.7px;top:873.7px;font-size:25.50px;line-height:25.50px;font-weight:400;color:#111;transform:scaleX(1.0235);transform-origin:0 0;-webkit-text-stroke:0.3px #111;">Entreprise Alpha</div>
<div class="t" style="left:2086.0px;top:873.7px;font-size:25.50px;line-height:25.50px;font-weight:400;color:#111;transform:scaleX(1.0235);transform-origin:0 0;-webkit-text-stroke:0.3px #111;">Entreprise Alpha</div>
<div class="t" style="left:2482.5px;top:875.0px;font-size:24.00px;line-height:24.00px;font-weight:400;color:#111;transform:scaleX(0.9387);transform-origin:0 0;-webkit-text-stroke:0.3px #111;">0 XOF</div>
<div class="t" style="left:2752.0px;top:875.0px;font-size:24.00px;line-height:24.00px;font-weight:400;color:#111;transform:scaleX(0.9387);transform-origin:0 0;-webkit-text-stroke:0.3px #111;">0 XOF</div>
<div class="t" style="left:3022.0px;top:875.0px;font-size:24.00px;line-height:24.00px;font-weight:400;color:#111;transform:scaleX(0.9387);transform-origin:0 0;-webkit-text-stroke:0.3px #111;">0 XOF</div>
<div class="t" style="left:3292.9px;top:875.0px;font-size:24.00px;line-height:24.00px;font-weight:400;color:#111;transform:scaleX(0.9387);transform-origin:0 0;-webkit-text-stroke:0.3px #111;">0 XOF</div>
<div class="b" style="left:617.0px;top:1006.0px;width:2938.0px;height:1.6px;background:#eff0f2;"></div>
<div class="b" style="left:646.6px;top:939.7px;width:237.9px;height:55.0px;border:3px solid #4fae68;border-radius:9px;"></div>
<div class="t" style="left:667.7px;top:953.5px;font-size:26.00px;line-height:26.00px;font-weight:400;color:#40a05c;-webkit-text-stroke:0.3px #40a05c;">Facture de vente</div>
<div class="b" style="left:970.5px;top:945.7px;width:121.1px;height:43.0px;background:#f4f4f4;border-radius:9px;"></div>
<div class="t" style="left:988.2px;top:955.5px;font-size:22.50px;line-height:22.50px;font-weight:400;color:#222;transform:scaleX(0.9686);transform-origin:0 0;-webkit-text-stroke:0.3px #222;">Brouillon</div>
<div class="t" style="left:1150.6px;top:955.2px;font-size:24.00px;line-height:24.00px;font-weight:400;color:#111;transform:scaleX(1.0141);transform-origin:0 0;-webkit-text-stroke:0.3px #111;">13/03/2026</div>
<div class="t" style="left:1438.4px;top:955.2px;font-size:24.00px;line-height:24.00px;font-weight:400;color:#111;transform:scaleX(0.9979);transform-origin:0 0;-webkit-text-stroke:0.3px #111;">Société Beta</div>
<div class="t" style="left:1726.7px;top:953.9px;font-size:25.50px;line-height:25.50px;font-weight:400;color:#111;transform:scaleX(1.0235);transform-origin:0 0;-webkit-text-stroke:0.3px #111;">Entreprise Alpha</div>
<div class="t" style="left:2086.0px;top:953.9px;font-size:25.50px;line-height:25.50px;font-weight:400;color:#111;transform:scaleX(1.0235);transform-origin:0 0;-webkit-text-stroke:0.3px #111;">Entreprise Alpha</div>
<div class="t" style="left:2482.5px;top:955.2px;font-size:24.00px;line-height:24.00px;font-weight:400;color:#111;transform:scaleX(0.9387);transform-origin:0 0;-webkit-text-stroke:0.3px #111;">0 XOF</div>
<div class="t" style="left:2752.0px;top:955.2px;font-size:24.00px;line-height:24.00px;font-weight:400;color:#111;transform:scaleX(0.9387);transform-origin:0 0;-webkit-text-stroke:0.3px #111;">0 XOF</div>
<div class="t" style="left:3022.0px;top:955.2px;font-size:24.00px;line-height:24.00px;font-weight:400;color:#111;transform:scaleX(0.9387);transform-origin:0 0;-webkit-text-stroke:0.3px #111;">0 XOF</div>
<div class="t" style="left:3292.9px;top:955.2px;font-size:24.00px;line-height:24.00px;font-weight:400;color:#111;transform:scaleX(0.9387);transform-origin:0 0;-webkit-text-stroke:0.3px #111;">0 XOF</div>
<div class="b" style="left:617.0px;top:1086.0px;width:2938.0px;height:1.6px;background:#eff0f2;"></div>
<div class="b" style="left:646.6px;top:1019.9px;width:237.9px;height:55.0px;border:3px solid #4fae68;border-radius:9px;"></div>
<div class="t" style="left:667.7px;top:1033.7px;font-size:26.00px;line-height:26.00px;font-weight:400;color:#40a05c;-webkit-text-stroke:0.3px #40a05c;">Facture de vente</div>
<div class="b" style="left:970.5px;top:1025.9px;width:121.1px;height:43.0px;background:#f4f4f4;border-radius:9px;"></div>
<div class="t" style="left:988.2px;top:1035.7px;font-size:22.50px;line-height:22.50px;font-weight:400;color:#222;transform:scaleX(0.9686);transform-origin:0 0;-webkit-text-stroke:0.3px #222;">Brouillon</div>
<div class="t" style="left:1150.6px;top:1035.4px;font-size:24.00px;line-height:24.00px;font-weight:400;color:#111;transform:scaleX(1.0141);transform-origin:0 0;-webkit-text-stroke:0.3px #111;">13/03/2026</div>
<div class="t" style="left:1438.4px;top:1035.4px;font-size:24.00px;line-height:24.00px;font-weight:400;color:#111;transform:scaleX(0.9513);transform-origin:0 0;-webkit-text-stroke:0.3px #111;">Jean Luc KONAN</div>
<div class="t" style="left:1726.7px;top:1034.2px;font-size:25.50px;line-height:25.50px;font-weight:400;color:#111;transform:scaleX(1.0235);transform-origin:0 0;-webkit-text-stroke:0.3px #111;">Entreprise Alpha</div>
<div class="t" style="left:2086.0px;top:1034.2px;font-size:25.50px;line-height:25.50px;font-weight:400;color:#111;transform:scaleX(1.0235);transform-origin:0 0;-webkit-text-stroke:0.3px #111;">Entreprise Alpha</div>
<div class="t" style="left:2482.5px;top:1035.4px;font-size:24.00px;line-height:24.00px;font-weight:400;color:#111;transform:scaleX(1.0193);transform-origin:0 0;-webkit-text-stroke:0.3px #111;">60&#8239;000 XOF</div>
<div class="t" style="left:2752.0px;top:1035.4px;font-size:24.00px;line-height:24.00px;font-weight:400;color:#111;transform:scaleX(0.9387);transform-origin:0 0;-webkit-text-stroke:0.3px #111;">0 XOF</div>
<div class="t" style="left:3022.0px;top:1035.4px;font-size:24.00px;line-height:24.00px;font-weight:400;color:#111;transform:scaleX(0.9527);transform-origin:0 0;-webkit-text-stroke:0.3px #111;">10&#8239;800 XOF</div>
<div class="t" style="left:3292.9px;top:1035.4px;font-size:24.00px;line-height:24.00px;font-weight:400;color:#111;transform:scaleX(0.9409);transform-origin:0 0;-webkit-text-stroke:0.3px #111;">24&#8239;128 XOF</div>
<div class="b" style="left:617.0px;top:1166.0px;width:2938.0px;height:1.6px;background:#eff0f2;"></div>
<div class="b" style="left:646.6px;top:1100.1px;width:237.9px;height:55.0px;border:3px solid #4fae68;border-radius:9px;"></div>
<div class="t" style="left:667.7px;top:1113.9px;font-size:26.00px;line-height:26.00px;font-weight:400;color:#40a05c;-webkit-text-stroke:0.3px #40a05c;">Facture de vente</div>
<div class="b" style="left:970.5px;top:1106.1px;width:121.1px;height:43.0px;background:#f4f4f4;border-radius:9px;"></div>
<div class="t" style="left:988.2px;top:1115.9px;font-size:22.50px;line-height:22.50px;font-weight:400;color:#222;transform:scaleX(0.9686);transform-origin:0 0;-webkit-text-stroke:0.3px #222;">Brouillon</div>
<div class="t" style="left:1150.6px;top:1115.6px;font-size:24.00px;line-height:24.00px;font-weight:400;color:#111;transform:scaleX(1.0141);transform-origin:0 0;-webkit-text-stroke:0.3px #111;">12/03/2026</div>
<div class="t" style="left:1438.4px;top:1115.6px;font-size:24.00px;line-height:24.00px;font-weight:400;color:#111;transform:scaleX(1.0142);transform-origin:0 0;-webkit-text-stroke:0.3px #111;">Entreprise Alpha</div>
<div class="t" style="left:1726.7px;top:1114.4px;font-size:25.50px;line-height:25.50px;font-weight:400;color:#111;transform:scaleX(1.0235);transform-origin:0 0;-webkit-text-stroke:0.3px #111;">Entreprise Alpha</div>
<div class="t" style="left:2086.0px;top:1114.4px;font-size:25.50px;line-height:25.50px;font-weight:400;color:#111;transform:scaleX(1.0235);transform-origin:0 0;-webkit-text-stroke:0.3px #111;">Entreprise Alpha</div>
<div class="t" style="left:2482.5px;top:1115.6px;font-size:24.00px;line-height:24.00px;font-weight:400;color:#111;transform:scaleX(0.9387);transform-origin:0 0;-webkit-text-stroke:0.3px #111;">0 XOF</div>
<div class="t" style="left:2752.0px;top:1115.6px;font-size:24.00px;line-height:24.00px;font-weight:400;color:#111;transform:scaleX(0.9387);transform-origin:0 0;-webkit-text-stroke:0.3px #111;">0 XOF</div>
<div class="t" style="left:3022.0px;top:1115.6px;font-size:24.00px;line-height:24.00px;font-weight:400;color:#111;transform:scaleX(0.9387);transform-origin:0 0;-webkit-text-stroke:0.3px #111;">0 XOF</div>
<div class="t" style="left:3292.9px;top:1115.6px;font-size:24.00px;line-height:24.00px;font-weight:400;color:#111;transform:scaleX(0.9387);transform-origin:0 0;-webkit-text-stroke:0.3px #111;">0 XOF</div>
<div class="b" style="left:617.0px;top:1246.0px;width:2938.0px;height:1.6px;background:#eff0f2;"></div>
<div class="b" style="left:646.6px;top:1180.4px;width:237.9px;height:55.0px;border:3px solid #4fae68;border-radius:9px;"></div>
<div class="t" style="left:667.7px;top:1194.2px;font-size:26.00px;line-height:26.00px;font-weight:400;color:#40a05c;-webkit-text-stroke:0.3px #40a05c;">Facture de vente</div>
<div class="b" style="left:970.5px;top:1186.4px;width:121.1px;height:43.0px;background:#f4f4f4;border-radius:9px;"></div>
<div class="t" style="left:988.2px;top:1196.1px;font-size:22.50px;line-height:22.50px;font-weight:400;color:#222;transform:scaleX(0.9686);transform-origin:0 0;-webkit-text-stroke:0.3px #222;">Brouillon</div>
<div class="t" style="left:1150.6px;top:1195.8px;font-size:24.00px;line-height:24.00px;font-weight:400;color:#111;transform:scaleX(1.0141);transform-origin:0 0;-webkit-text-stroke:0.3px #111;">12/03/2026</div>
<div class="t" style="left:1438.4px;top:1195.8px;font-size:24.00px;line-height:24.00px;font-weight:400;color:#111;transform:scaleX(1.0142);transform-origin:0 0;-webkit-text-stroke:0.3px #111;">Entreprise Alpha</div>
<div class="t" style="left:1726.7px;top:1194.6px;font-size:25.50px;line-height:25.50px;font-weight:400;color:#111;transform:scaleX(1.0235);transform-origin:0 0;-webkit-text-stroke:0.3px #111;">Entreprise Alpha</div>
<div class="t" style="left:2086.0px;top:1194.6px;font-size:25.50px;line-height:25.50px;font-weight:400;color:#111;transform:scaleX(1.0235);transform-origin:0 0;-webkit-text-stroke:0.3px #111;">Entreprise Alpha</div>
<div class="t" style="left:2482.5px;top:1195.8px;font-size:24.00px;line-height:24.00px;font-weight:400;color:#111;transform:scaleX(0.9387);transform-origin:0 0;-webkit-text-stroke:0.3px #111;">0 XOF</div>
<div class="t" style="left:2752.0px;top:1195.8px;font-size:24.00px;line-height:24.00px;font-weight:400;color:#111;transform:scaleX(0.9387);transform-origin:0 0;-webkit-text-stroke:0.3px #111;">0 XOF</div>
<div class="t" style="left:3022.0px;top:1195.8px;font-size:24.00px;line-height:24.00px;font-weight:400;color:#111;transform:scaleX(0.9387);transform-origin:0 0;-webkit-text-stroke:0.3px #111;">0 XOF</div>
<div class="t" style="left:3292.9px;top:1195.8px;font-size:24.00px;line-height:24.00px;font-weight:400;color:#111;transform:scaleX(0.9387);transform-origin:0 0;-webkit-text-stroke:0.3px #111;">0 XOF</div>
<div class="b" style="left:617.0px;top:1327.0px;width:2938.0px;height:1.6px;background:#eff0f2;"></div>
<div class="b" style="left:646.6px;top:1260.6px;width:237.9px;height:55.0px;border:3px solid #4fae68;border-radius:9px;"></div>
<div class="t" style="left:667.7px;top:1274.4px;font-size:26.00px;line-height:26.00px;font-weight:400;color:#40a05c;-webkit-text-stroke:0.3px #40a05c;">Facture de vente</div>
<div class="b" style="left:970.5px;top:1266.6px;width:121.1px;height:43.0px;background:#f4f4f4;border-radius:9px;"></div>
<div class="t" style="left:988.2px;top:1276.3px;font-size:22.50px;line-height:22.50px;font-weight:400;color:#222;transform:scaleX(0.9686);transform-origin:0 0;-webkit-text-stroke:0.3px #222;">Brouillon</div>
<div class="t" style="left:1150.6px;top:1276.1px;font-size:24.00px;line-height:24.00px;font-weight:400;color:#111;transform:scaleX(1.0141);transform-origin:0 0;-webkit-text-stroke:0.3px #111;">12/03/2026</div>
<div class="t" style="left:1438.4px;top:1276.1px;font-size:24.00px;line-height:24.00px;font-weight:400;color:#111;transform:scaleX(1.0142);transform-origin:0 0;-webkit-text-stroke:0.3px #111;">Entreprise Alpha</div>
<div class="t" style="left:1726.7px;top:1274.8px;font-size:25.50px;line-height:25.50px;font-weight:400;color:#111;transform:scaleX(1.0235);transform-origin:0 0;-webkit-text-stroke:0.3px #111;">Entreprise Alpha</div>
<div class="t" style="left:2086.0px;top:1274.8px;font-size:25.50px;line-height:25.50px;font-weight:400;color:#111;transform:scaleX(1.0235);transform-origin:0 0;-webkit-text-stroke:0.3px #111;">Entreprise Alpha</div>
<div class="t" style="left:2482.5px;top:1276.1px;font-size:24.00px;line-height:24.00px;font-weight:400;color:#111;transform:scaleX(0.9387);transform-origin:0 0;-webkit-text-stroke:0.3px #111;">0 XOF</div>
<div class="t" style="left:2752.0px;top:1276.1px;font-size:24.00px;line-height:24.00px;font-weight:400;color:#111;transform:scaleX(0.9387);transform-origin:0 0;-webkit-text-stroke:0.3px #111;">0 XOF</div>
<div class="t" style="left:3022.0px;top:1276.1px;font-size:24.00px;line-height:24.00px;font-weight:400;color:#111;transform:scaleX(0.9387);transform-origin:0 0;-webkit-text-stroke:0.3px #111;">0 XOF</div>
<div class="t" style="left:3292.9px;top:1276.1px;font-size:24.00px;line-height:24.00px;font-weight:400;color:#111;transform:scaleX(0.9360);transform-origin:0 0;-webkit-text-stroke:0.3px #111;">95 XOF</div>
<div class="b" style="left:617.0px;top:1407.0px;width:2938.0px;height:1.6px;background:#eff0f2;"></div>
<div class="b" style="left:646.6px;top:1340.8px;width:237.9px;height:55.0px;border:3px solid #4fae68;border-radius:9px;"></div>
<div class="t" style="left:667.7px;top:1354.6px;font-size:26.00px;line-height:26.00px;font-weight:400;color:#40a05c;-webkit-text-stroke:0.3px #40a05c;">Facture de vente</div>
<div class="b" style="left:970.5px;top:1346.8px;width:121.1px;height:43.0px;background:#f4f4f4;border-radius:9px;"></div>
<div class="t" style="left:988.2px;top:1356.5px;font-size:22.50px;line-height:22.50px;font-weight:400;color:#222;transform:scaleX(0.9686);transform-origin:0 0;-webkit-text-stroke:0.3px #222;">Brouillon</div>
<div class="t" style="left:1150.6px;top:1356.3px;font-size:24.00px;line-height:24.00px;font-weight:400;color:#111;transform:scaleX(1.0141);transform-origin:0 0;-webkit-text-stroke:0.3px #111;">12/03/2026</div>
<div class="t" style="left:1438.4px;top:1356.3px;font-size:24.00px;line-height:24.00px;font-weight:400;color:#111;transform:scaleX(1.0142);transform-origin:0 0;-webkit-text-stroke:0.3px #111;">Entreprise Alpha</div>
<div class="t" style="left:1726.7px;top:1355.0px;font-size:25.50px;line-height:25.50px;font-weight:400;color:#111;transform:scaleX(1.0235);transform-origin:0 0;-webkit-text-stroke:0.3px #111;">Entreprise Alpha</div>
<div class="t" style="left:2086.0px;top:1355.0px;font-size:25.50px;line-height:25.50px;font-weight:400;color:#111;transform:scaleX(1.0235);transform-origin:0 0;-webkit-text-stroke:0.3px #111;">Entreprise Alpha</div>
<div class="t" style="left:2482.5px;top:1356.3px;font-size:24.00px;line-height:24.00px;font-weight:400;color:#111;transform:scaleX(0.9387);transform-origin:0 0;-webkit-text-stroke:0.3px #111;">0 XOF</div>
<div class="t" style="left:2752.0px;top:1356.3px;font-size:24.00px;line-height:24.00px;font-weight:400;color:#111;transform:scaleX(0.9387);transform-origin:0 0;-webkit-text-stroke:0.3px #111;">0 XOF</div>
<div class="t" style="left:3022.0px;top:1356.3px;font-size:24.00px;line-height:24.00px;font-weight:400;color:#111;transform:scaleX(0.9387);transform-origin:0 0;-webkit-text-stroke:0.3px #111;">0 XOF</div>
<div class="t" style="left:3292.9px;top:1356.3px;font-size:24.00px;line-height:24.00px;font-weight:400;color:#111;transform:scaleX(0.9387);transform-origin:0 0;-webkit-text-stroke:0.3px #111;">0 XOF</div>
<div class="b" style="left:617.0px;top:1487.0px;width:2938.0px;height:1.6px;background:#eff0f2;"></div>
<div class="b" style="left:646.6px;top:1421.0px;width:237.9px;height:55.0px;border:3px solid #4fae68;border-radius:9px;"></div>
<div class="t" style="left:667.7px;top:1434.8px;font-size:26.00px;line-height:26.00px;font-weight:400;color:#40a05c;-webkit-text-stroke:0.3px #40a05c;">Facture de vente</div>
<div class="b" style="left:970.5px;top:1427.0px;width:121.1px;height:43.0px;background:#f4f4f4;border-radius:9px;"></div>
<div class="t" style="left:988.2px;top:1436.7px;font-size:22.50px;line-height:22.50px;font-weight:400;color:#222;transform:scaleX(0.9686);transform-origin:0 0;-webkit-text-stroke:0.3px #222;">Brouillon</div>
<div class="t" style="left:1150.6px;top:1436.5px;font-size:24.00px;line-height:24.00px;font-weight:400;color:#111;transform:scaleX(1.0141);transform-origin:0 0;-webkit-text-stroke:0.3px #111;">12/03/2026</div>
<div class="t" style="left:1438.4px;top:1436.5px;font-size:24.00px;line-height:24.00px;font-weight:400;color:#111;transform:scaleX(1.0142);transform-origin:0 0;-webkit-text-stroke:0.3px #111;">Entreprise Alpha</div>
<div class="t" style="left:1726.7px;top:1435.2px;font-size:25.50px;line-height:25.50px;font-weight:400;color:#111;transform:scaleX(1.0235);transform-origin:0 0;-webkit-text-stroke:0.3px #111;">Entreprise Alpha</div>
<div class="t" style="left:2086.0px;top:1435.2px;font-size:25.50px;line-height:25.50px;font-weight:400;color:#111;transform:scaleX(1.0235);transform-origin:0 0;-webkit-text-stroke:0.3px #111;">Entreprise Alpha</div>
<div class="t" style="left:2482.5px;top:1436.5px;font-size:24.00px;line-height:24.00px;font-weight:400;color:#111;transform:scaleX(0.9387);transform-origin:0 0;-webkit-text-stroke:0.3px #111;">0 XOF</div>
<div class="t" style="left:2752.0px;top:1436.5px;font-size:24.00px;line-height:24.00px;font-weight:400;color:#111;transform:scaleX(0.9387);transform-origin:0 0;-webkit-text-stroke:0.3px #111;">0 XOF</div>
<div class="t" style="left:3022.0px;top:1436.5px;font-size:24.00px;line-height:24.00px;font-weight:400;color:#111;transform:scaleX(0.9387);transform-origin:0 0;-webkit-text-stroke:0.3px #111;">0 XOF</div>
<div class="t" style="left:3292.9px;top:1436.5px;font-size:24.00px;line-height:24.00px;font-weight:400;color:#111;transform:scaleX(0.9033);transform-origin:0 0;-webkit-text-stroke:0.3px #111;">27 XOF</div>
<div class="b" style="left:3375.0px;top:600.0px;width:180.0px;height:888.0px;background:rgba(255,255,255,0.93);border-left:1.5px solid #dadada;"></div>
<div class="b" style="left:3375.0px;top:600.0px;width:180.0px;height:1.5px;background:#e3e6ea;"></div>
<div class="t" style="left:3438.7px;top:629.0px;font-size:26.00px;line-height:26.00px;font-weight:400;color:#333;transform:scaleX(1.0087);transform-origin:0 0;-webkit-text-stroke:0.3px #333;">Actions</div>
<div class="b" style="left:3548.6px;top:633.0px;width:1.6px;height:21.0px;background:#b9bec7;"></div>
<div class="b" style="left:3377.0px;top:765.0px;width:178.0px;height:1.6px;background:#eff0f2;"></div>
<div class="b" style="left:3468.0px;top:697.8px;width:58.0px;height:58.0px;background:#f4f5f4;border-radius:50%;"></div>
<svg class="b" style="left:3490px;top:710.8px" width="14" height="32" viewBox="0 0 14 32" fill="none" stroke="#e07a3c" stroke-width="1.4"><circle cx="7" cy="7" r="1.85"/><circle cx="7" cy="16" r="1.85"/><circle cx="7" cy="25" r="1.85"/></svg>
<div class="b" style="left:3377.0px;top:845.0px;width:178.0px;height:1.6px;background:#eff0f2;"></div>
<div class="b" style="left:3468.0px;top:778.0px;width:58.0px;height:58.0px;background:#f4f5f4;border-radius:50%;"></div>
<svg class="b" style="left:3490px;top:791.0px" width="14" height="32" viewBox="0 0 14 32" fill="none" stroke="#e07a3c" stroke-width="1.4"><circle cx="7" cy="7" r="1.85"/><circle cx="7" cy="16" r="1.85"/><circle cx="7" cy="25" r="1.85"/></svg>
<div class="b" style="left:3377.0px;top:926.0px;width:178.0px;height:1.6px;background:#eff0f2;"></div>
<div class="b" style="left:3468.0px;top:858.2px;width:58.0px;height:58.0px;background:#f4f5f4;border-radius:50%;"></div>
<svg class="b" style="left:3490px;top:871.2px" width="14" height="32" viewBox="0 0 14 32" fill="none" stroke="#e07a3c" stroke-width="1.4"><circle cx="7" cy="7" r="1.85"/><circle cx="7" cy="16" r="1.85"/><circle cx="7" cy="25" r="1.85"/></svg>
<div class="b" style="left:3377.0px;top:1006.0px;width:178.0px;height:1.6px;background:#eff0f2;"></div>
<div class="b" style="left:3468.0px;top:938.4px;width:58.0px;height:58.0px;background:#f4f5f4;border-radius:50%;"></div>
<svg class="b" style="left:3490px;top:951.4px" width="14" height="32" viewBox="0 0 14 32" fill="none" stroke="#e07a3c" stroke-width="1.4"><circle cx="7" cy="7" r="1.85"/><circle cx="7" cy="16" r="1.85"/><circle cx="7" cy="25" r="1.85"/></svg>
<div class="b" style="left:3377.0px;top:1086.0px;width:178.0px;height:1.6px;background:#eff0f2;"></div>
<div class="b" style="left:3468.0px;top:1018.6px;width:58.0px;height:58.0px;background:#f4f5f4;border-radius:50%;"></div>
<svg class="b" style="left:3490px;top:1031.6px" width="14" height="32" viewBox="0 0 14 32" fill="none" stroke="#e07a3c" stroke-width="1.4"><circle cx="7" cy="7" r="1.85"/><circle cx="7" cy="16" r="1.85"/><circle cx="7" cy="25" r="1.85"/></svg>
<div class="b" style="left:3377.0px;top:1166.0px;width:178.0px;height:1.6px;background:#eff0f2;"></div>
<div class="b" style="left:3468.0px;top:1098.8px;width:58.0px;height:58.0px;background:#f4f5f4;border-radius:50%;"></div>
<svg class="b" style="left:3490px;top:1111.8px" width="14" height="32" viewBox="0 0 14 32" fill="none" stroke="#e07a3c" stroke-width="1.4"><circle cx="7" cy="7" r="1.85"/><circle cx="7" cy="16" r="1.85"/><circle cx="7" cy="25" r="1.85"/></svg>
<div class="b" style="left:3377.0px;top:1246.0px;width:178.0px;height:1.6px;background:#eff0f2;"></div>
<div class="b" style="left:3468.0px;top:1179.1px;width:58.0px;height:58.0px;background:#f4f5f4;border-radius:50%;"></div>
<svg class="b" style="left:3490px;top:1192.1px" width="14" height="32" viewBox="0 0 14 32" fill="none" stroke="#e07a3c" stroke-width="1.4"><circle cx="7" cy="7" r="1.85"/><circle cx="7" cy="16" r="1.85"/><circle cx="7" cy="25" r="1.85"/></svg>
<div class="b" style="left:3377.0px;top:1327.0px;width:178.0px;height:1.6px;background:#eff0f2;"></div>
<div class="b" style="left:3468.0px;top:1259.3px;width:58.0px;height:58.0px;background:#f4f5f4;border-radius:50%;"></div>
<svg class="b" style="left:3490px;top:1272.3px" width="14" height="32" viewBox="0 0 14 32" fill="none" stroke="#e07a3c" stroke-width="1.4"><circle cx="7" cy="7" r="1.85"/><circle cx="7" cy="16" r="1.85"/><circle cx="7" cy="25" r="1.85"/></svg>
<div class="b" style="left:3377.0px;top:1407.0px;width:178.0px;height:1.6px;background:#eff0f2;"></div>
<div class="b" style="left:3468.0px;top:1339.5px;width:58.0px;height:58.0px;background:#f4f5f4;border-radius:50%;"></div>
<svg class="b" style="left:3490px;top:1352.5px" width="14" height="32" viewBox="0 0 14 32" fill="none" stroke="#e07a3c" stroke-width="1.4"><circle cx="7" cy="7" r="1.85"/><circle cx="7" cy="16" r="1.85"/><circle cx="7" cy="25" r="1.85"/></svg>
<div class="b" style="left:3377.0px;top:1487.0px;width:178.0px;height:1.6px;background:#eff0f2;"></div>
<div class="b" style="left:3468.0px;top:1419.7px;width:58.0px;height:58.0px;background:#f4f5f4;border-radius:50%;"></div>
<svg class="b" style="left:3490px;top:1432.7px" width="14" height="32" viewBox="0 0 14 32" fill="none" stroke="#e07a3c" stroke-width="1.4"><circle cx="7" cy="7" r="1.85"/><circle cx="7" cy="16" r="1.85"/><circle cx="7" cy="25" r="1.85"/></svg>
<div class="t" style="left:2547.0px;top:1540.6px;font-size:26.50px;line-height:26.50px;font-weight:400;color:#111;transform:scaleX(0.9729);transform-origin:0 0;-webkit-text-stroke:0.3px #111;">Eléments par page</div>
<div class="b" style="left:2778.0px;top:1510.0px;width:151.5px;height:88.0px;background:#f6f7f8;border-radius:20px;"></div>
<div class="t" style="left:2839.7px;top:1541.5px;font-size:25.39px;line-height:25.39px;font-weight:400;color:#9a9a9a;transform:scaleX(0.8500);transform-origin:0 0;-webkit-text-stroke:0.3px #9a9a9a;">10</div>
<svg class="b" style="left:2890px;top:1545px" width="26" height="20" viewBox="0 0 26 20"><path d="M4.1,5.2 L21.7,5.2 L12.9,14.2 Z" fill="#000"/></svg>
<div class="t" style="left:2994.5px;top:1541.0px;font-size:26.00px;line-height:26.00px;font-weight:400;color:#111;transform:scaleX(0.9324);transform-origin:0 0;-webkit-text-stroke:0.3px #111;">1 – 10 sur 25</div>
<div class="b" style="left:3296.0px;top:1518.0px;width:72.0px;height:72.0px;background:#e2e2e2;border-radius:50%;"></div>
<svg class="b" style="left:3220px;top:1530px" width="310" height="50" viewBox="0 0 310 50" fill="none" stroke-width="4.2"><path d="M16.5,12.6 L16.5,34.3" stroke="#000"/><path d="M36.7,13.5 L24.7,23.5 L36.7,33.5" stroke="#000"/><path d="M117.3,13.5 L105.9,23.5 L117.3,33.5" stroke="#9a9ea2"/><path d="M192.5,13.5 L203.4,23.5 L192.5,33.5" stroke="#000"/><path d="M273.8,13.5 L285.2,23.5 L273.8,33.5" stroke="#000"/><path d="M293.6,12.6 L293.6,34.3" stroke="#000"/></svg>
<div class="t" style="left:625.3px;top:1940.6px;font-size:26.50px;line-height:26.50px;font-weight:700;color:#7a7a7a;transform:scaleX(0.9867);transform-origin:0 0;">Copyright © 2026</div>
<div class="t" style="left:849.4px;top:1942.9px;font-size:23.69px;line-height:23.69px;font-weight:400;color:#7a7a7a;transform:scaleX(0.8500);transform-origin:0 0;-webkit-text-stroke:0.3px #7a7a7a;">–</div>
<div class="t" style="left:868.8px;top:1941.8px;font-size:25.00px;line-height:25.00px;font-weight:400;color:#7a7a7a;transform:scaleX(0.8700);transform-origin:0 0;-webkit-text-stroke:0.3px #7a7a7a;">FNE</div>
<div class="t" style="left:3329.8px;top:1940.6px;font-size:26.50px;line-height:26.50px;font-weight:700;color:#7a7a7a;transform:scaleX(1.0030);transform-origin:0 0;">vdev (11/03/2026)</div>
</div></body></html>
